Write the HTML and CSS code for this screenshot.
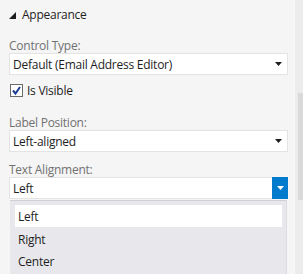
FILE: index.html
```html
<!DOCTYPE html>
<html lang="en">
<head>
  <meta charset="UTF-8" />
  <title>Properties</title>
  <link rel="stylesheet" href="styles.css">
</head>
<body>
  <div class="page">
    <div class="panel">
      <div class="group-header">
        <svg class="expander" width="7" height="7" viewBox="0 0 7 7"><polygon points="7,0 7,7 0,7" fill="#1e1e1e"/></svg>
        <span>Appearance</span>
      </div>

      <div class="field-label">Control Type:</div>
      <div class="combo">
        <span class="combo-text">Default (Email Address Editor)</span>
        <span class="combo-button"><svg width="7" height="4" viewBox="0 0 7 4"><polygon points="0,0 7,0 3.5,4" fill="#1e1e1e"/></svg></span>
      </div>

      <label class="check-row">
        <svg class="checkbox" width="13" height="13" viewBox="0 0 13 13">
          <rect x="0.5" y="0.5" width="12" height="12" fill="#fff" stroke="#6b6b6b"/>
          <polyline points="3,6.5 5.5,9.5 10,3" fill="none" stroke="#1c3f94" stroke-width="2"/>
        </svg>
        <span>Is Visible</span>
      </label>

      <div class="field-label spaced">Label Position:</div>
      <div class="combo">
        <span class="combo-text">Left-aligned</span>
        <span class="combo-button"><svg width="7" height="4" viewBox="0 0 7 4"><polygon points="0,0 7,0 3.5,4" fill="#1e1e1e"/></svg></span>
      </div>

      <div class="field-label">Text Alignment:</div>
      <div class="combo-wrap">
        <div class="combo open">
          <span class="combo-text">Left</span>
          <span class="combo-button"><svg width="7" height="4" viewBox="0 0 7 4"><polygon points="0,0 7,0 3.5,4" fill="#fff"/></svg></span>
        </div>
        <ul class="dropdown">
          <li class="selected">Left</li>
          <li>Right</li>
          <li>Center</li>
        </ul>
      </div>
    </div>

    <div class="scrollbar">
      <div class="thumb"></div>
    </div>
  </div>
</body>
</html>
```

FILE: styles.css
```css
* {
  box-sizing: border-box;
}

body {
  margin: 0;
  background: #f5f5f5;
  font-family: "Segoe UI", "Open Sans", sans-serif;
  font-size: 12px;
  letter-spacing: -0.25px;
  color: #1e1e1e;
}

.page {
  display: flex;
  height: 274px;
  overflow: hidden;
}

.panel {
  flex: 1;
  padding: 0 6px 0 9px;
}

.group-header {
  display: flex;
  align-items: center;
  gap: 6px;
  padding-top: 7px;
  line-height: 16px;
  margin-bottom: 13px;
}

.field-label {
  color: #717171;
  line-height: 15px;
  padding-top: 2px;
  margin-top: 8px;
}

.group-header + .field-label {
  margin-top: 0;
}

.field-label.spaced {
  margin-top: 16px;
}

.combo {
  display: flex;
  align-items: center;
  height: 22px;
  background: #fff;
  border: 1px solid #e3e3e3;
}

.combo-text {
  flex: 1;
  padding-left: 3px;
}

.combo-button {
  width: 16px;
  height: 100%;
  display: flex;
  align-items: center;
  justify-content: center;
  margin-right: 1px;
}

.combo.open {
  border-right: none;
}

.combo.open .combo-button {
  background: #007acc;
  height: 22px;
  margin-right: 0;
}

.check-row {
  display: flex;
  align-items: center;
  gap: 4px;
  margin-top: 8px;
  padding-left: 1px;
  height: 14px;
}

.combo-wrap {
  position: relative;
}

.dropdown {
  position: absolute;
  top: 23px;
  left: 1px;
  right: 1px;
  margin: 0;
  padding: 4px 4px 20px 5px;
  list-style: none;
  background: #e8e8ec;
  border-top: 1px solid #cfd0d6;
  border-right: 1px solid #dcdce2;
}

.dropdown li {
  height: 22px;
  line-height: 24px;
  padding-left: 3px;
  margin-bottom: 0.5px;
}

.dropdown li.selected {
  background: #fff;
}

.scrollbar {
  width: 9px;
  background: #ececec;
  border-left: 1px solid #f9f9f9;
  padding-top: 93px;
}

.thumb {
  margin-left: 3px;
  height: 107px;
  background: #d9d9d9;
}
```
